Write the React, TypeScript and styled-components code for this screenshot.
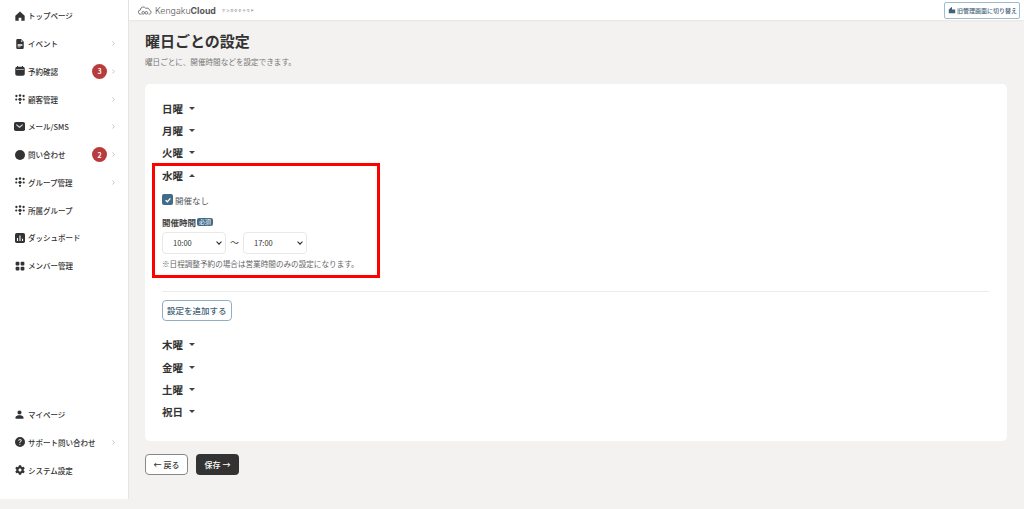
import { ReactNode } from 'react';
import styled, { createGlobalStyle } from 'styled-components';
import {
  BsChevronRight,
  BsCircleFill,
  BsFileEarmarkTextFill,
  BsGridFill,
  BsPersonFill,
  BsQuestionCircleFill,
} from 'react-icons/bs';
import { FaCog } from 'react-icons/fa';

const GlobalStyle = createGlobalStyle`
  html, body {
    margin: 0;
    padding: 0;
    background: #f3f2f0;
    color: #333;
    font-family: "Noto Sans CJK JP", "Noto Sans", sans-serif;
  }
  * { box-sizing: border-box; }
`;

const HomeIcon = () => (
  <svg viewBox="0 0 12 12" width="10" height="10" fill="#333">
    <path d="M6 .6 11.6 5.6V11a.7.7 0 0 1-.7.7H7.6V8.2H4.4v3.5H1.1A.7.7 0 0 1 .4 11V5.6z" />
  </svg>
);

const CalendarIcon = () => (
  <svg viewBox="0 0 12 12" width="10" height="10">
    <rect x="0.3" y="1" width="11.4" height="10.8" rx="2.2" fill="#333" />
    <path d="M3 0v2M9 0v2" stroke="#333" strokeWidth="1.2" />
    <path d="M1.4 4.2h9.2" stroke="#ccc" strokeWidth="0.9" />
  </svg>
);

const GroupIcon = () => (
  <svg viewBox="0 0 12 12" width="10" height="10" fill="#333">
    <circle cx="1.7" cy="2.4" r="1.4" />
    <circle cx="6" cy="1.8" r="1.5" />
    <circle cx="10.3" cy="2.4" r="1.4" />
    <circle cx="1.5" cy="6.6" r="1.3" />
    <circle cx="10.5" cy="6.6" r="1.3" />
    <circle cx="6" cy="6.4" r="1.9" />
    <circle cx="6" cy="10.6" r="1.3" />
  </svg>
);

const MailIcon = () => (
  <svg viewBox="0 0 12 12" width="11" height="11">
    <rect x="0" y="1" width="12" height="10" rx="2" fill="#333" />
    <path d="M2.5 4 6 6.8 9.5 4" stroke="#ddd" strokeWidth="1.2" fill="none" />
  </svg>
);

const ChartIcon = () => (
  <svg viewBox="0 0 12 12" width="10" height="10">
    <rect x="0" y="0" width="12" height="12" rx="2" fill="#333" />
    <path d="M3 6v3.5M6 3v6.5M9 7v2.5" stroke="#fff" strokeWidth="1.3" />
  </svg>
);

const CloudLogo = () => (
  <svg viewBox="0 0 16 10" width="14" height="9" fill="none" stroke="#666" strokeWidth="1">
    <path d="M4 9.2H3a2.4 2.4 0 0 1-.3-4.8A3.4 3.4 0 0 1 9 2.6a2.8 2.8 0 0 1 4.2 2.1A2.3 2.3 0 0 1 13 9.2h-1" />
    <circle cx="6" cy="7.6" r="1.5" />
    <circle cx="9.6" cy="7.6" r="1.5" />
  </svg>
);

const SwitchIcon = () => (
  <svg viewBox="0 0 10 10" width="8" height="8" fill="#3f6278">
    <path d="M1 4.5 5 1v3.5h4V9H1z" />
  </svg>
);

type NavEntry = { icon: ReactNode; label: string; badge?: number; arrow?: boolean };

const mainNav: NavEntry[] = [
  { icon: <HomeIcon />, label: 'トップページ' },
  { icon: <BsFileEarmarkTextFill size={10} />, label: 'イベント', arrow: true },
  { icon: <CalendarIcon />, label: '予約確認', badge: 3, arrow: true },
  { icon: <GroupIcon />, label: '顧客管理', arrow: true },
  { icon: <MailIcon />, label: 'メール/SMS', arrow: true },
  { icon: <BsCircleFill size={10} />, label: '問い合わせ', badge: 2, arrow: true },
  { icon: <GroupIcon />, label: 'グループ管理', arrow: true },
  { icon: <GroupIcon />, label: '所属グループ' },
  { icon: <ChartIcon />, label: 'ダッシュボード' },
  { icon: <BsGridFill size={10} />, label: 'メンバー管理' },
];

const subNav: NavEntry[] = [
  { icon: <BsPersonFill size={11} />, label: 'マイページ' },
  { icon: <BsQuestionCircleFill size={10} />, label: 'サポート問い合わせ', arrow: true },
  { icon: <FaCog size={10} />, label: 'システム設定' },
];

const NavItem = ({ entry }: { entry: NavEntry }) => (
  <NavRow>
    <NavIcon>{entry.icon}</NavIcon>
    <NavLabel>{entry.label}</NavLabel>
    {entry.badge && <Badge>{entry.badge}</Badge>}
    {entry.arrow && (
      <NavArrow>
        <BsChevronRight size={5} />
      </NavArrow>
    )}
  </NavRow>
);

const DayTitle = ({ label, open }: { label: string; open?: boolean }) => (
  <DayRow>
    {label}
    <Caret $open={open} />
  </DayRow>
);

export default function App() {
  return (
    <Page lang="ja">
      <GlobalStyle />
      <Sidebar>
        <NavGroup>
          {mainNav.map((entry) => (
            <NavItem key={entry.label} entry={entry} />
          ))}
        </NavGroup>
        <NavGroup>
          {subNav.map((entry) => (
            <NavItem key={entry.label} entry={entry} />
          ))}
        </NavGroup>
      </Sidebar>
      <Content>
        <TopBar>
          <Logo>
            <CloudLogo />
            <LogoName>
              Kengaku<b>Cloud</b>
            </LogoName>
            <LogoKana>ケンガククラウド</LogoKana>
          </Logo>
          <SwitchButton>
            <SwitchIcon />
            旧管理画面に切り替え
          </SwitchButton>
        </TopBar>
        <Main>
          <Title>曜日ごとの設定</Title>
          <Lead>曜日ごとに、開催時間などを設定できます。</Lead>
          <Card>
            <DayTitle label="日曜" />
            <DayTitle label="月曜" />
            <DayTitle label="火曜" />
            <OpenDay>
              <RedFrame />
              <DayTitle label="水曜" open />
              <CheckRow>
                <CheckBox>
                  <svg viewBox="0 0 10 10" width="8" height="8" fill="none" stroke="#fff" strokeWidth="1.6">
                    <path d="M2 5.2 4.2 7.2 8 3" />
                  </svg>
                </CheckBox>
                開催なし
              </CheckRow>
              <FieldLabel>
                開催時間<Required>必須</Required>
              </FieldLabel>
              <TimeRow>
                <TimeSelect>
                  10:00
                  <SelectArrow />
                </TimeSelect>
                <Tilde>〜</Tilde>
                <TimeSelect>
                  17:00
                  <SelectArrow />
                </TimeSelect>
              </TimeRow>
              <Note>※日程調整予約の場合は営業時間のみの設定になります。</Note>
            </OpenDay>
            <Divider />
            <AddButton>設定を追加する</AddButton>
            <LowerDays>
              <DayTitle label="木曜" />
              <DayTitle label="金曜" />
              <DayTitle label="土曜" />
              <DayTitle label="祝日" />
            </LowerDays>
          </Card>
          <Actions>
            <BackButton>← 戻る</BackButton>
            <SaveButton>保存 →</SaveButton>
          </Actions>
        </Main>
      </Content>
    </Page>
  );
}

const Page = styled.div`
  display: flex;
  width: 1024px;
  height: 509px;
  overflow: hidden;
  background: #f3f2f0;
`;

const Sidebar = styled.aside`
  display: flex;
  flex-direction: column;
  justify-content: space-between;
  flex: none;
  width: 129px;
  height: 499px;
  padding: 2px 0 15px;
  background: #fff;
  border-right: 1px solid #e6e5e3;
`;

const NavGroup = styled.nav`
  display: flex;
  flex-direction: column;
`;

const NavRow = styled.div`
  display: flex;
  align-items: center;
  height: 27.75px;
  padding: 0 12px 0 14px;
  font-size: 7.5px;
  font-weight: 500;
  color: #333;
`;

const NavIcon = styled.span`
  display: flex;
  align-items: center;
  justify-content: center;
  width: 11px;
  margin-right: 3px;
  color: #333;
`;

const NavLabel = styled.span`
  flex: 1;
  white-space: nowrap;
`;

const Badge = styled.span`
  display: flex;
  align-items: center;
  justify-content: center;
  width: 15px;
  height: 15px;
  margin-right: 4px;
  border-radius: 50%;
  background: #b93c3c;
  color: #fff;
  font-size: 7px;
  font-weight: 700;
`;

const NavArrow = styled.span`
  display: flex;
  color: #777;
`;

const Content = styled.div`
  flex: 1;
  display: flex;
  flex-direction: column;
  min-width: 0;
`;

const TopBar = styled.header`
  display: flex;
  align-items: center;
  justify-content: space-between;
  flex: none;
  height: 20px;
  padding: 0 4px 0 9px;
  background: #fff;
  box-shadow: 0 1px 2px rgba(0, 0, 0, 0.05);
`;

const Logo = styled.div`
  display: flex;
  align-items: center;
  gap: 3px;
`;

const LogoName = styled.span`
  font-family: "Inter", "Liberation Sans", sans-serif;
  font-size: 8.8px;
  font-weight: 300;
  color: #555;

  b {
    font-weight: 700;
  }
`;

const LogoKana = styled.span`
  margin-left: 3px;
  font-size: 3.6px;
  letter-spacing: 0.5px;
  color: #555;
`;

const SwitchButton = styled.button`
  display: flex;
  align-items: center;
  gap: 1px;
  height: 17px;
  padding: 0 2px 0 3px;
  background: #fff;
  border: 1px solid #9fbccd;
  border-radius: 2px;
  font-family: inherit;
  font-size: 6px;
  font-weight: 500;
  color: #3f6278;
`;

const Main = styled.main`
  flex: 1;
  display: flex;
  flex-direction: column;
  padding: 9px 17px 0 16px;
`;

const Title = styled.h1`
  margin: 0;
  font-size: 15px;
  line-height: 24px;
  font-weight: 700;
  color: #333;
`;

const Lead = styled.p`
  margin: 2px 0 0;
  font-size: 7.6px;
  line-height: 14px;
  color: #777;
`;

const Card = styled.section`
  display: flex;
  flex-direction: column;
  height: 357px;
  margin-top: 15px;
  padding: 13px 18px 0 17px;
  background: #fff;
  border-radius: 5px;
`;

const DayRow = styled.div`
  display: flex;
  align-items: center;
  gap: 6px;
  height: 22.4px;
  font-size: 10.5px;
  font-weight: 700;
  color: #333;
`;

const Caret = styled.span<{ $open?: boolean }>`
  width: 0;
  height: 0;
  border-left: 3px solid transparent;
  border-right: 3px solid transparent;
  ${({ $open }) =>
    $open ? 'border-bottom: 3px solid #444;' : 'border-top: 3px solid #444;'}
`;

const OpenDay = styled.div`
  position: relative;
  display: flex;
  flex-direction: column;
`;

const RedFrame = styled.div`
  position: absolute;
  top: -1px;
  left: -10px;
  width: 228px;
  height: 115px;
  border: 3px solid #f00;
  pointer-events: none;
`;

const CheckRow = styled.label`
  display: flex;
  align-items: center;
  gap: 2px;
  height: 14px;
  margin-top: 6px;
  font-size: 8.5px;
  color: #555;
`;

const CheckBox = styled.span`
  display: flex;
  align-items: center;
  justify-content: center;
  width: 11px;
  height: 11px;
  border-radius: 2px;
  background: #3f6c88;
`;

const FieldLabel = styled.div`
  display: flex;
  align-items: center;
  gap: 1px;
  height: 12px;
  margin-top: 9px;
  font-size: 8.5px;
  font-weight: 700;
  color: #444;
`;

const Required = styled.span`
  padding: 0 2px;
  border-radius: 2px;
  background: #3f6c88;
  color: #fff;
  font-size: 6px;
  line-height: 8px;
  font-weight: 400;
`;

const TimeRow = styled.div`
  display: flex;
  align-items: center;
  gap: 4px;
  margin-top: 4px;
`;

const TimeSelect = styled.div`
  position: relative;
  width: 64px;
  height: 22px;
  padding-left: 10px;
  background: #fff;
  border: 1px solid #e8e8e8;
  border-radius: 4px;
  font-size: 7.5px;
  line-height: 20px;
  color: #333;
`;

const SelectArrow = styled.span`
  position: absolute;
  top: 7px;
  right: 4px;
  width: 4px;
  height: 4px;
  border-right: 1.2px solid #222;
  border-bottom: 1.2px solid #222;
  transform: rotate(45deg);
`;

const Tilde = styled.span`
  width: 9px;
  font-size: 9px;
  color: #444;
`;

const Note = styled.p`
  margin: 4px 0 0;
  font-size: 7.6px;
  line-height: 12px;
  white-space: nowrap;
  color: #666;
`;

const Divider = styled.hr`
  flex: none;
  width: 100%;
  height: 1px;
  margin: 21px 0 0;
  background: #ebebeb;
  border: 0;
`;

const AddButton = styled.button`
  align-self: flex-start;
  height: 21px;
  margin-top: 8px;
  padding: 0 4px;
  background: #fff;
  border: 1px solid #8fb0c4;
  border-radius: 4px;
  font-family: inherit;
  font-size: 8.5px;
  font-weight: 500;
  color: #3f6278;
`;

const LowerDays = styled.div`
  display: flex;
  flex-direction: column;
  margin-top: 13px;
`;

const Actions = styled.div`
  display: flex;
  gap: 8px;
  margin-top: 13px;
`;

const BackButton = styled.button`
  width: 43px;
  height: 21px;
  padding: 0;
  background: #fff;
  border: 1px solid #888;
  border-radius: 4px;
  font-family: inherit;
  font-size: 8px;
  font-weight: 500;
  color: #333;
`;

const SaveButton = styled.button`
  width: 43px;
  height: 21px;
  padding: 0;
  background: #333;
  border: 0;
  border-radius: 4px;
  font-family: inherit;
  font-size: 8px;
  font-weight: 500;
  color: #fff;
`;
